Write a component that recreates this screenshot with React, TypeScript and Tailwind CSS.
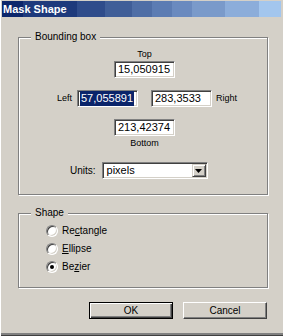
import React from 'react';

const BANDS: { w: string; bg: string }[] = [
  { w: 'w-[21px]', bg: 'bg-[#0c266b]' },
  { w: 'w-[54px]', bg: 'bg-[#1e3a7c]' },
  { w: 'w-[28px]', bg: 'bg-[#2f4c8b]' },
  { w: 'w-[27px]', bg: 'bg-[#405e98]' },
  { w: 'w-[20px]', bg: 'bg-[#4f6ea6]' },
  { w: 'w-[20px]', bg: 'bg-[#5c7cb3]' },
  { w: 'w-[20px]', bg: 'bg-[#6a8abf]' },
  { w: 'w-[33px]', bg: 'bg-[#7a9aca]' },
  { w: 'w-[34px]', bg: 'bg-[#8cadda]' },
  { w: 'w-[22px]', bg: 'bg-[#a3c6ee]' },
];

function Field({ value, selected = false, w = 'w-[61px]' }: { value: string; selected?: boolean; w?: string }) {
  return (
    <div
      className={`${w} h-[17px] bg-white border border-t-[#808080] border-l-[#808080] border-b-white border-r-white shadow-[inset_1px_1px_0_#404040,inset_-1px_-1px_0_#d4d0c8] flex items-center pl-[2px] overflow-hidden text-[11px] leading-none whitespace-nowrap`}
    >
      {selected ? (
        <span className="bg-[#0a246a] text-white px-px py-[2px]">{value}</span>
      ) : (
        <span className="px-px">{value}</span>
      )}
    </div>
  );
}

function Group({ title, h, children }: { title: string; h: string; children: React.ReactNode }) {
  return (
    <div className={`relative w-[250px] ${h} border border-[#808080] shadow-[inset_1px_1px_0_#fff,1px_1px_0_#fff]`}>
      <span className="absolute left-[12px] top-[-7px] px-[4px] bg-[#d4d0c8] text-[10px] leading-[12px]">{title}</span>
      {children}
    </div>
  );
}

function Radio({ checked, children }: { checked?: boolean; children: React.ReactNode }) {
  return (
    <div className="h-[18px] flex items-center">
      <div className="w-[12px] h-[12px] rounded-full bg-white border border-t-[#808080] border-l-[#808080] border-b-white border-r-white shadow-[inset_1px_1px_0_#404040,inset_-1px_-1px_0_#d4d0c8] flex items-center justify-center">
        {checked && <div className="w-[4px] h-[4px] rounded-full bg-black" />}
      </div>
      <span className="ml-[4px] text-[10px] leading-none">{children}</span>
    </div>
  );
}

function Button({ label, def = false }: { label: string; def?: boolean }) {
  return (
    <div
      className={
        def
          ? 'w-[84px] h-[17px] border border-black shadow-[inset_1px_1px_0_#fff,inset_-1px_-1px_0_#404040,inset_-2px_-2px_0_#808080] flex items-center justify-center text-[10px] leading-none'
          : 'w-[84px] h-[17px] border border-t-white border-l-white border-b-[#404040] border-r-[#404040] shadow-[inset_-1px_-1px_0_#808080] flex items-center justify-center text-[10px] leading-none'
      }
    >
      {label}
    </div>
  );
}

export default function App() {
  return (
    <div className="w-[283px] h-[336px] bg-[#d4d0c8] border-l border-white flex flex-col font-['Liberation_Sans',Arial,sans-serif] text-black overflow-hidden">
      {/* Title bar */}
      <div className="relative flex h-[16px] mt-[1px] ml-[1px] w-[279px]">
        {BANDS.map((b, i) => (
          <div key={i} className={`${b.w} h-full ${b.bg}`} />
        ))}
        <span className="absolute left-[1px] top-0 h-full flex items-center text-white font-bold text-[11px] leading-none">
          Mask Shape
        </span>
      </div>

      <div className="flex-1 flex flex-col pl-[17px]">
        {/* Bounding box */}
        <div className="mt-[20px]">
          <Group title="Bounding box" h="h-[158px]">
            <div className="flex flex-col pt-[10px]">
              <div className="ml-[95px] w-[61px] text-center text-[9px] leading-[13px]">Top</div>
              <div className="ml-[95px]">
                <Field value="15,050915" />
              </div>
              <div className="mt-[12px] flex items-center">
                <span className="w-[53px] text-right text-[9px] leading-none">Left</span>
                <div className="ml-[5px]">
                  <Field value="57,055891" selected />
                </div>
                <div className="ml-[13px]">
                  <Field value="283,3533" />
                </div>
                <span className="ml-[4px] text-[9px] leading-none">Right</span>
              </div>
              <div className="mt-[12px] ml-[95px]">
                <Field value="213,42374" />
              </div>
              <div className="mt-[1px] ml-[95px] w-[61px] text-center text-[9px] leading-[13px]">Bottom</div>
              <div className="mt-[12px] flex items-center pl-[51px]">
                <span className="text-[10px] leading-none">Units:</span>
                <div className="ml-[6px] w-[106px] h-[17px] bg-white border border-t-[#808080] border-l-[#808080] border-b-white border-r-white shadow-[inset_1px_1px_0_#404040,inset_-1px_-1px_0_#d4d0c8] flex items-center pl-[4px] pr-[1px]">
                  <span className="flex-1 text-[11px] leading-none">pixels</span>
                  <div className="w-[14px] h-[13px] bg-[#d4d0c8] border border-t-[#d4d0c8] border-l-[#d4d0c8] border-b-[#404040] border-r-[#404040] shadow-[inset_1px_1px_0_#fff,inset_-1px_-1px_0_#808080] flex items-center justify-center">
                    <svg width="7" height="4" viewBox="0 0 7 4">
                      <path d="M0 0h7L3.5 4z" fill="#000" />
                    </svg>
                  </div>
                </div>
              </div>
            </div>
          </Group>
        </div>

        {/* Shape */}
        <div className="mt-[18px]">
          <Group title="Shape" h="h-[75px]">
            <div className="flex flex-col pt-[8px] pl-[27px]">
              <Radio>
                Re<span className="underline">c</span>tangle
              </Radio>
              <Radio>
                <span className="underline">E</span>llipse
              </Radio>
              <Radio checked>
                Be<span className="underline">z</span>ier
              </Radio>
            </div>
          </Group>
        </div>

        {/* Buttons */}
        <div className="mt-[14px] pl-[71px] flex gap-[10px]">
          <Button label="OK" def />
          <Button label="Cancel" />
        </div>
      </div>

      <div className="h-[2px] bg-[#808080]" />
      <div className="h-px bg-[#404040]" />
    </div>
  );
}
